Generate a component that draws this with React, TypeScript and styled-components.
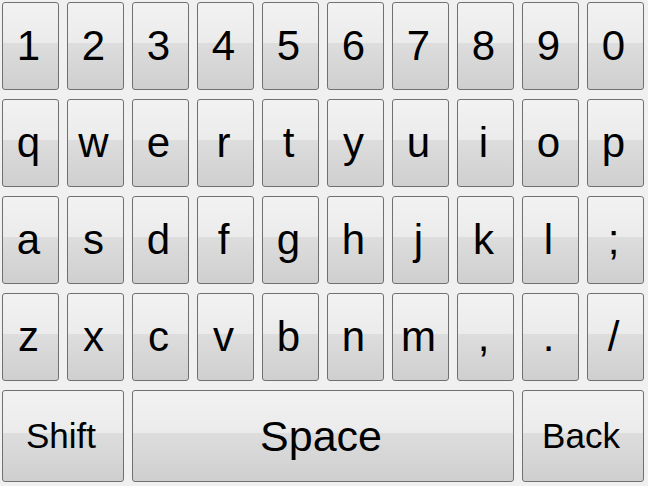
import * as React from 'react';
import styled, { createGlobalStyle } from 'styled-components';

const GlobalStyle = createGlobalStyle`
    html, body {
        margin: 0;
        padding: 0;
        background: #f0f0f0;
    }
    body {
        font-family: "Liberation Sans", Arial, sans-serif;
    }
`

const Board = styled.div`
    width: 648px;
    height: 486px;
    box-sizing: border-box;
    padding: 2px 3px 0 2px;
    display: flex;
    flex-direction: column;
    gap: 9px;
    background: #f0f0f0;
`

const Row = styled.div<{$tall?: boolean}>`
    display: grid;
    grid-template-columns: repeat(10, 57px);
    column-gap: 8px;
    height: ${({$tall}) => $tall ? "92px" : "88px"};
`

const Key = styled.button<{$span?: number, $size?: number}>`
    grid-column: span ${({$span}) => $span || 1};
    margin: 0;
    padding: 0 4px 0 0;
    box-sizing: border-box;
    border: 1px solid #707070;
    border-radius: 3px;
    background: linear-gradient(
        to bottom,
        #f2f2f2 0%,
        #ebebeb 47%,
        #dddddd 47%,
        #cfcfcf 100%
    );
    color: #000;
    font-family: "Liberation Sans", Arial, sans-serif;
    font-size: ${({$size}) => $size || 42}px;
    display: flex;
    align-items: center;
    justify-content: center;
    cursor: pointer;
`

const rows = [
    ["1", "2", "3", "4", "5", "6", "7", "8", "9", "0"],
    ["q", "w", "e", "r", "t", "y", "u", "i", "o", "p"],
    ["a", "s", "d", "f", "g", "h", "j", "k", "l", ";"],
    ["z", "x", "c", "v", "b", "n", "m", ",", ".", "/"],
]

export default function App() {
    return (
        <>
            <GlobalStyle />
            <Board>
                {rows.map((row, i) => (
                    <Row key={i}>
                        {row.map((k) => (
                            <Key key={k}>{k}</Key>
                        ))}
                    </Row>
                ))}
                <Row $tall>
                    <Key $span={2} $size={35}>Shift</Key>
                    <Key $span={6} $size={43}>Space</Key>
                    <Key $span={2} $size={35}>Back</Key>
                </Row>
            </Board>
        </>
    )
}
